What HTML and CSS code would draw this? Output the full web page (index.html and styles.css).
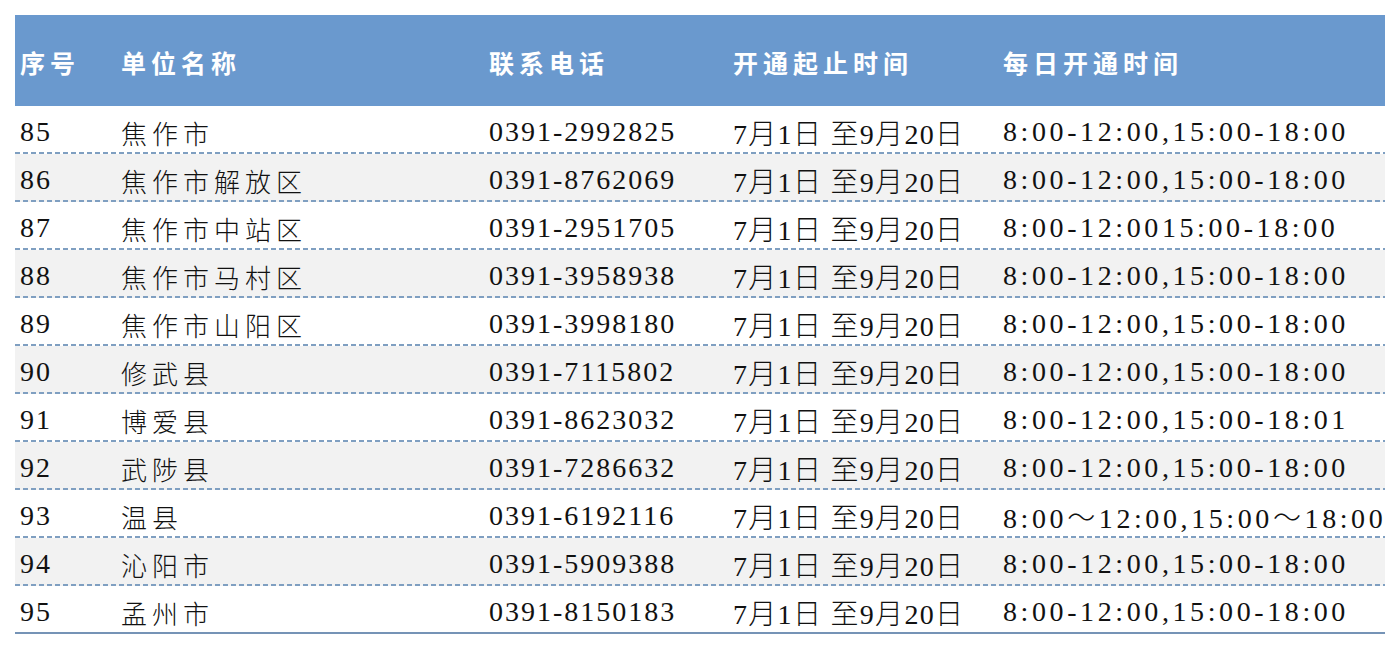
FILE: index.html
```html
<!DOCTYPE html>
<html lang="zh-CN">
<head>
<meta charset="utf-8">
<title>开通时间表</title>
<link rel="stylesheet" href="styles.css">
</head>
<body>
<div class="sheet">
  <div class="row head">
    <div class="cell">序号</div>
    <div class="cell">单位名称</div>
    <div class="cell">联系电话</div>
    <div class="cell">开通起止时间</div>
    <div class="cell">每日开通时间</div>
  </div>
  <div class="row">
    <div class="cell">85</div><div class="cell name">焦作市</div><div class="cell">0391-2992825</div><div class="cell date">7月1日 至9月20日</div><div class="cell time">8:00-12:00,15:00-18:00</div>
  </div>
  <div class="row alt">
    <div class="cell">86</div><div class="cell name">焦作市解放区</div><div class="cell">0391-8762069</div><div class="cell date">7月1日 至9月20日</div><div class="cell time">8:00-12:00,15:00-18:00</div>
  </div>
  <div class="row">
    <div class="cell">87</div><div class="cell name">焦作市中站区</div><div class="cell">0391-2951705</div><div class="cell date">7月1日 至9月20日</div><div class="cell time">8:00-12:0015:00-18:00</div>
  </div>
  <div class="row alt">
    <div class="cell">88</div><div class="cell name">焦作市马村区</div><div class="cell">0391-3958938</div><div class="cell date">7月1日 至9月20日</div><div class="cell time">8:00-12:00,15:00-18:00</div>
  </div>
  <div class="row">
    <div class="cell">89</div><div class="cell name">焦作市山阳区</div><div class="cell">0391-3998180</div><div class="cell date">7月1日 至9月20日</div><div class="cell time">8:00-12:00,15:00-18:00</div>
  </div>
  <div class="row alt">
    <div class="cell">90</div><div class="cell name">修武县</div><div class="cell">0391-7115802</div><div class="cell date">7月1日 至9月20日</div><div class="cell time">8:00-12:00,15:00-18:00</div>
  </div>
  <div class="row">
    <div class="cell">91</div><div class="cell name">博爱县</div><div class="cell">0391-8623032</div><div class="cell date">7月1日 至9月20日</div><div class="cell time">8:00-12:00,15:00-18:01</div>
  </div>
  <div class="row alt">
    <div class="cell">92</div><div class="cell name">武陟县</div><div class="cell">0391-7286632</div><div class="cell date">7月1日 至9月20日</div><div class="cell time">8:00-12:00,15:00-18:00</div>
  </div>
  <div class="row">
    <div class="cell">93</div><div class="cell name">温县</div><div class="cell">0391-6192116</div><div class="cell date">7月1日 至9月20日</div><div class="cell time">8:00～12:00,15:00～18:00</div>
  </div>
  <div class="row alt">
    <div class="cell">94</div><div class="cell name">沁阳市</div><div class="cell">0391-5909388</div><div class="cell date">7月1日 至9月20日</div><div class="cell time">8:00-12:00,15:00-18:00</div>
  </div>
  <div class="row last">
    <div class="cell">95</div><div class="cell name">孟州市</div><div class="cell">0391-8150183</div><div class="cell date">7月1日 至9月20日</div><div class="cell time">8:00-12:00,15:00-18:00</div>
  </div>
</div>
</body>
</html>
```
FILE: styles.css
```css
html, body {
  margin: 0;
  padding: 0;
  background: #ffffff;
}

.sheet {
  width: 1370px;
  margin: 15px 0 0 15px;
}

.row {
  display: grid;
  grid-template-columns: 101px 368px 244px 270px 1fr;
  height: 48px;
  box-sizing: border-box;
  padding-bottom: 2px;
  font-family: "Liberation Serif", "Noto Sans CJK SC", serif;
  font-size: 28px;
  font-weight: 300;
  letter-spacing: 2px;
  color: #111111;
  background-color: #ffffff;
  background-image: repeating-linear-gradient(to right, #7f9fc1 0 5px, transparent 5px 8px);
  background-size: 100% 2px;
  background-position: left bottom;
  background-repeat: no-repeat;
}

.row.alt {
  background-color: #f2f2f2;
}

.row.last {
  background-image: linear-gradient(#7593b6, #7593b6);
}

.cell {
  display: flex;
  align-items: center;
  padding: 5px 0 0 5px;
  white-space: nowrap;
}

.name {
  font-family: "Noto Sans CJK SC", serif;
  font-size: 26px;
  letter-spacing: 5px;
  padding-top: 6px;
}

.date {
  letter-spacing: 1.3px;
}

.time {
  letter-spacing: 3.6px;
}

.row.head {
  height: 91px;
  padding: 0;
  background: #6a99ce;
  color: #ffffff;
  font-family: "Noto Sans CJK SC", sans-serif;
  font-weight: 700;
  font-size: 25px;
  letter-spacing: 5px;
}

.row.head .cell {
  padding: 3px 0 0 5px;
}
```
